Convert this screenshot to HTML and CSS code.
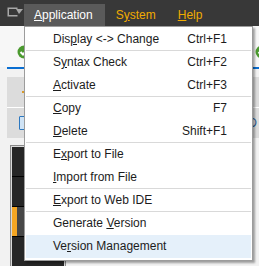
FILE: index.html
```html
<!DOCTYPE html>
<html lang="en">
<head>
  <meta charset="UTF-8" />
  <title>Application Menu</title>
  <link rel="stylesheet" href="styles.css">
</head>
<body>
  <div class="menubar">
    <span class="sys-icon">
      <svg width="16" height="10" viewBox="0 0 16 10">
        <path d="M0.5 0.5 H10.5 V2 H2 V8 H10.5 V9.5 H0.5 Z" fill="#a8a8a8"/>
        <path d="M9 2 H16 L12 7 Z" fill="#a8a8a8"/>
      </svg>
    </span>
    <span class="tab active"><u>A</u>pplication</span>
    <span class="tab gold">S<u>y</u>stem</span>
    <span class="tab gold"><u>H</u>elp</span>
  </div>

  <div class="workspace">
    <div class="toolbar">
      <span class="ok-icon">
        <svg width="14" height="14" viewBox="0 0 14 14">
          <circle cx="7" cy="7" r="6.5" fill="#4b9a2f"/>
          <path d="M3.5 7 L6 9.5 L10.5 4.5" fill="none" stroke="#fff" stroke-width="2"/>
        </svg>
      </span>
      <span class="ok-icon right">
        <svg width="14" height="14" viewBox="0 0 14 14">
          <circle cx="7" cy="7" r="6.5" fill="#4b9a2f"/>
          <path d="M3.5 7 L6 9.5 L10.5 4.5" fill="none" stroke="#fff" stroke-width="2"/>
        </svg>
      </span>
    </div>
    <div class="tab-underline"></div>

    <div class="panel">
      <div class="panel-row"><span class="dot"></span></div>
      <div class="panel-row"><span class="btn-edge"></span><span class="btn-letter">D</span></div>
    </div>

    <div class="tree">
      <div class="tree-row"></div>
      <div class="tree-row"></div>
      <div class="tree-row selected"><span class="mark"></span></div>
      <div class="tree-row"></div>
    </div>
  </div>

  <div class="dropdown">
    <div class="item sep"><span>Dis<u>p</u>lay &lt;-&gt; Change</span><span class="key">Ctrl+F1</span></div>
    <div class="item"><span>S<u>y</u>ntax Check</span><span class="key">Ctrl+F2</span></div>
    <div class="item sep"><span><u>A</u>ctivate</span><span class="key">Ctrl+F3</span></div>
    <div class="item"><span><u>C</u>opy</span><span class="key">F7</span></div>
    <div class="item sep"><span><u>D</u>elete</span><span class="key">Shift+F1</span></div>
    <div class="item"><span>E<u>x</u>port to File</span></div>
    <div class="item sep"><span><u>I</u>mport from File</span></div>
    <div class="item sep"><span><u>E</u>xport to Web IDE</span></div>
    <div class="item"><span>Generate <u>V</u>ersion</span></div>
    <div class="item hover"><span>Ve<u>r</u>sion Management</span></div>
  </div>
</body>
</html>
```

FILE: styles.css
```css
body {
  margin: 0;
  width: 259px;
  height: 266px;
  overflow: hidden;
  font-family: "Liberation Sans", Arial, sans-serif;
  font-size: 12px;
  background: #f2f2f2;
  position: relative;
}

u {
  text-decoration: underline;
  text-underline-offset: 1px;
}

.menubar {
  height: 26px;
  box-sizing: border-box;
  padding-top: 4px;
  background: #383838;
  display: flex;
  align-items: flex-start;
}

.sys-icon {
  width: 24px;
  height: 22px;
  display: flex;
  align-items: flex-start;
  padding: 3px 0 0 7px;
  box-sizing: border-box;
}

.tab {
  height: 22px;
  line-height: 22px;
  padding: 0 12px 0 10px;
  color: #fff;
}

.tab.active {
  background: #5a5a5a;
}

.tab.gold {
  color: #f0ab00;
  padding: 0 11px;
}

.workspace {
  display: flex;
  flex-direction: column;
}

.toolbar {
  height: 41px;
  box-sizing: border-box;
  padding: 19px 0 0 17px;
  background: #f7f7f7;
  display: flex;
  align-items: flex-start;
}

.ok-icon {
  width: 14px;
  height: 14px;
}

.ok-icon.right {
  margin-left: auto;
  margin-right: -10px;
}

.tab-underline {
  height: 2px;
  margin-left: 7px;
  background: #0a6ed1;
}

.panel {
  margin: 8px 0 0 7px;
  display: flex;
  flex-direction: column;
  gap: 1px;
  background: #fff;
}

.panel-row {
  height: 30px;
  background: #dcdcdc;
  display: flex;
  align-items: center;
  padding-left: 12px;
}

.dot {
  width: 3px;
  height: 2px;
  margin-left: 3px;
  background: #d89a2a;
}

.btn-edge {
  width: 12px;
  height: 12px;
  border: 1px solid #2c78c0;
  background: #cfe3f5;
  border-radius: 1px;
}

.btn-letter {
  margin-left: auto;
  margin-right: 2px;
  color: #2c5c96;
}

.tree {
  margin: 7px 0 0 10px;
  width: 52px;
  border: 1px solid #8a8a8a;
  padding: 1px;
  background: #dadada;
}

.tree-row {
  height: 29px;
  background: #262626;
  border-bottom: 1px solid #000;
  display: flex;
}

.tree-row.selected {
  background: #474747;
}

.mark {
  width: 5px;
  background: #f5a623;
}

.dropdown {
  position: absolute;
  top: 26px;
  left: 24px;
  width: 227px;
  padding: 1px 0 2px;
  background: #fff;
  border: 1px solid #9c9c9c;
  box-shadow: 2px 2px 2px rgba(0, 0, 0, 0.35);
  color: #1c1c1c;
}

.item {
  height: 23px;
  box-sizing: border-box;
  padding: 0 24px 0 27px;
  line-height: 22px;
  display: flex;
  justify-content: space-between;
  margin: 0 1px;
}

.item.sep {
  border-bottom: 1px solid #d9d9d9;
}

.item.hover {
  background: #e5f0fa;
}
```
